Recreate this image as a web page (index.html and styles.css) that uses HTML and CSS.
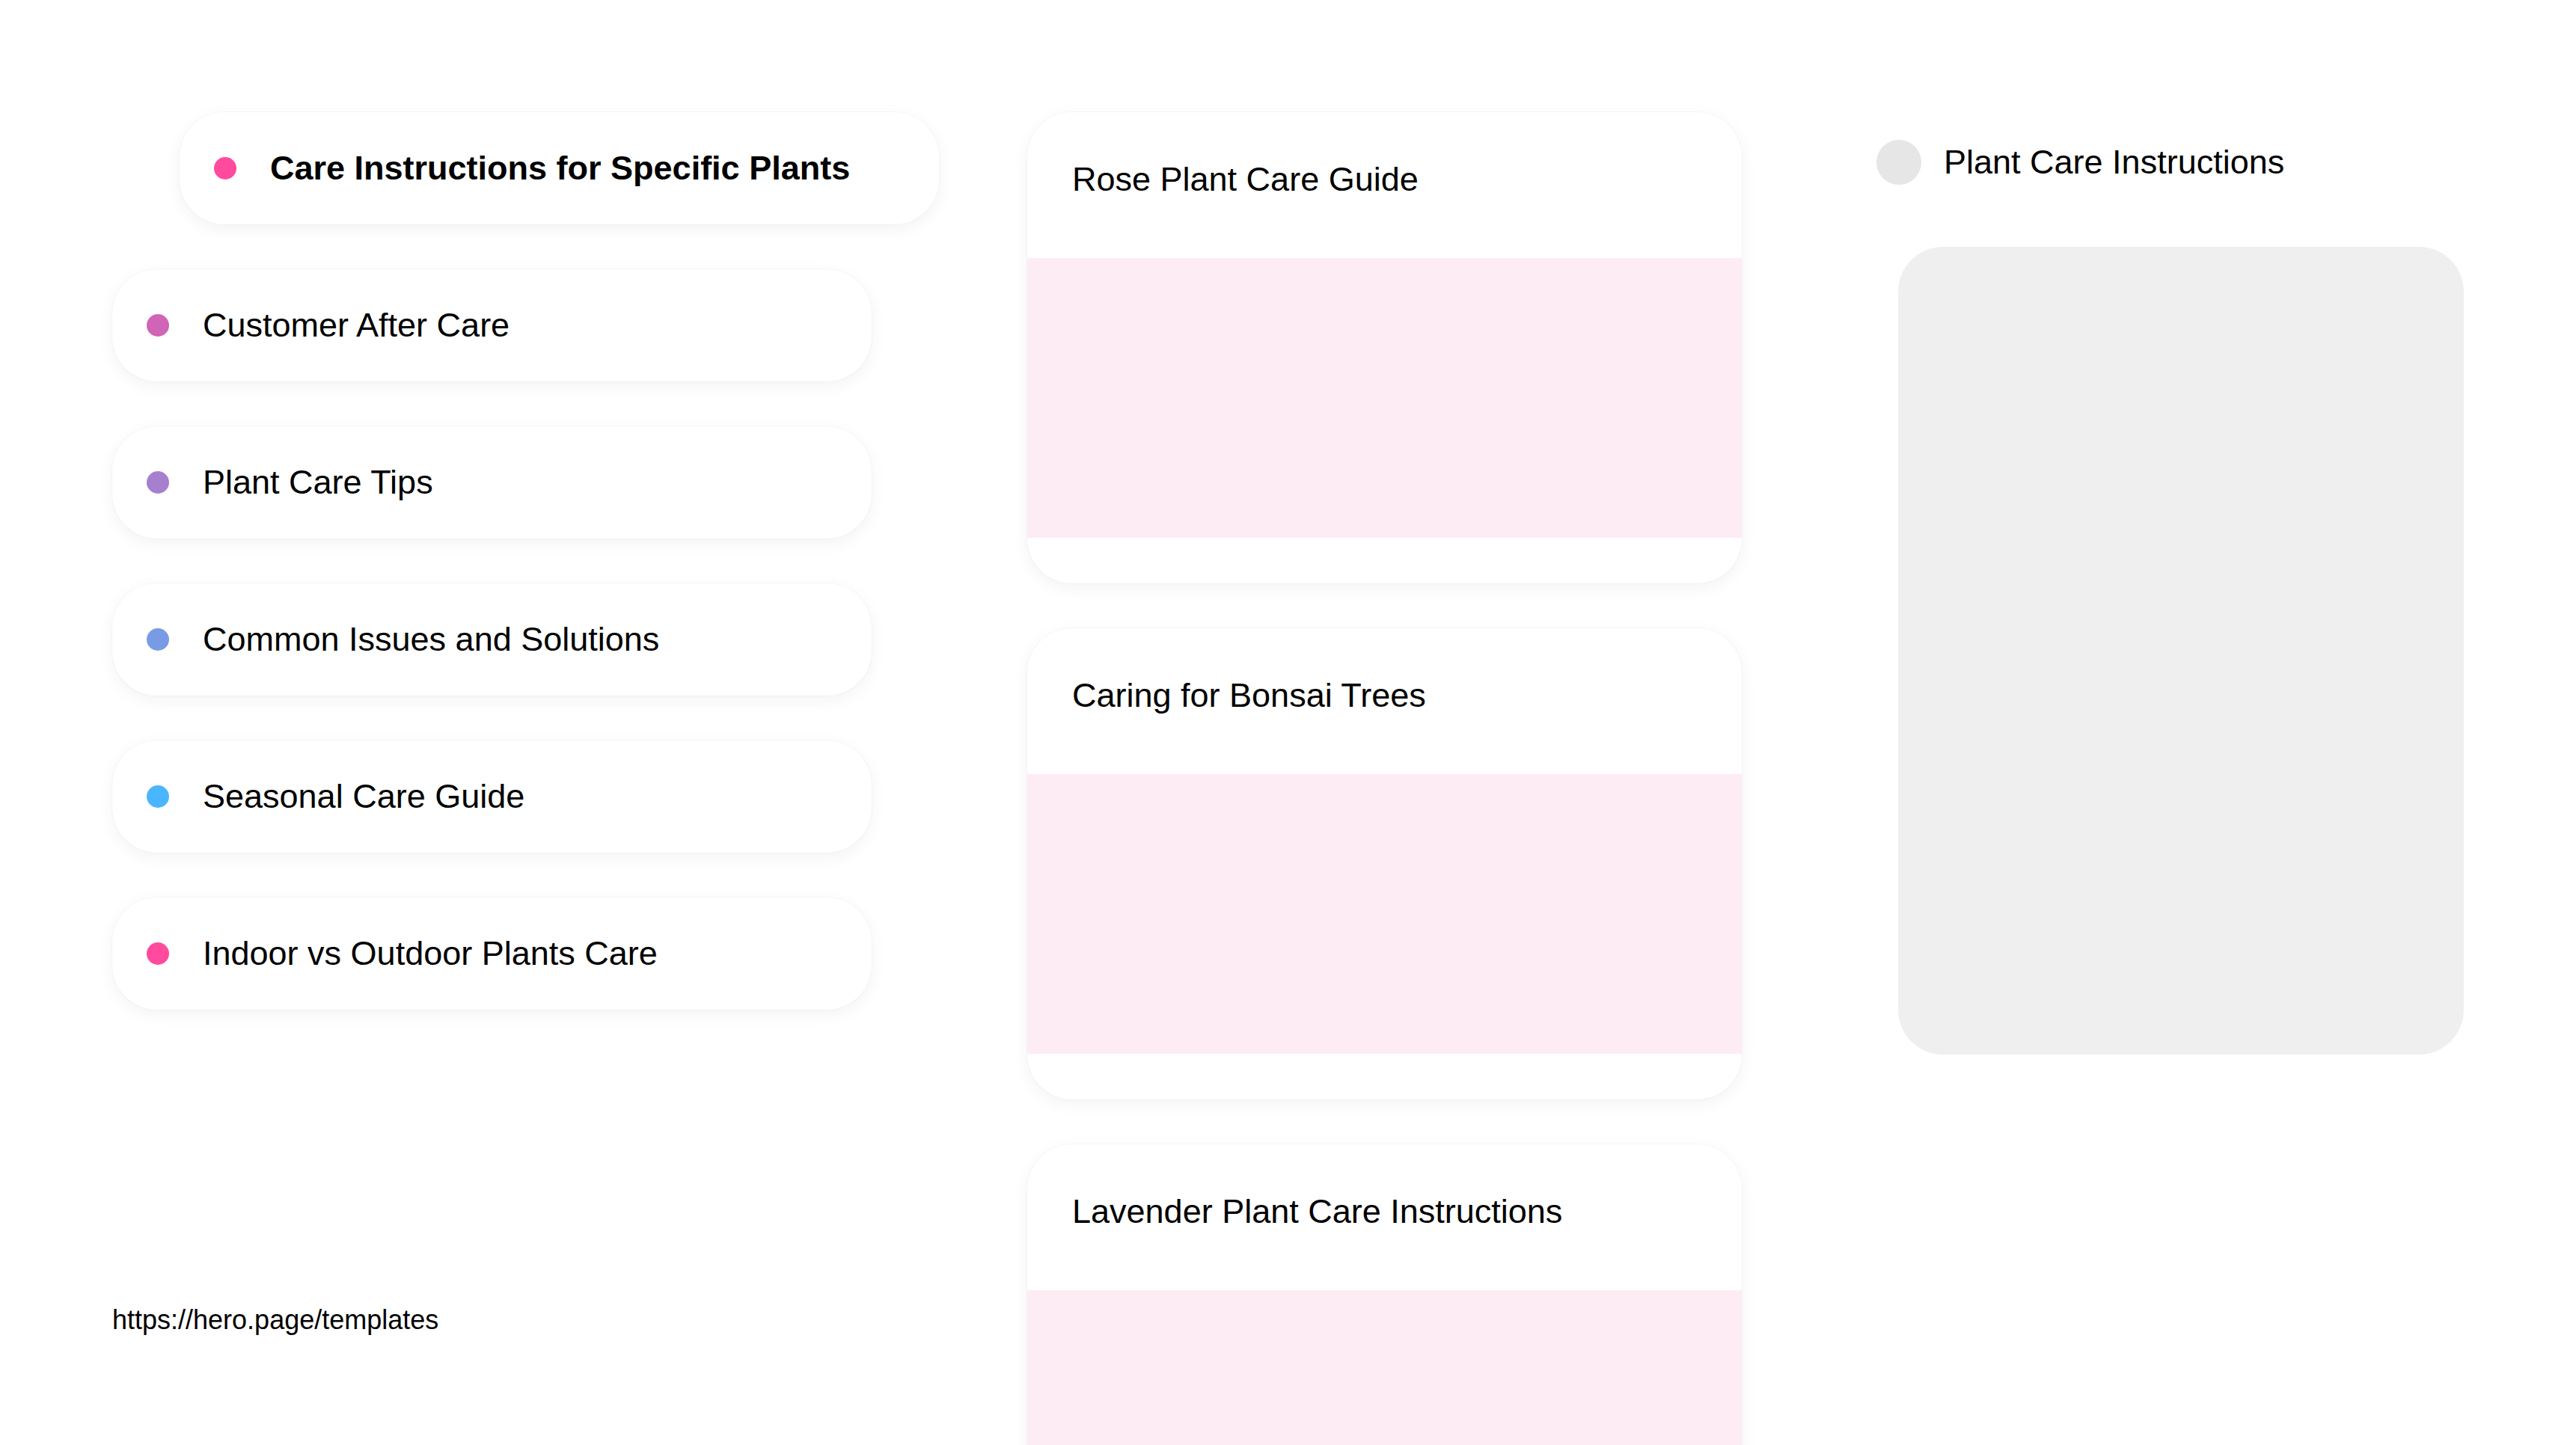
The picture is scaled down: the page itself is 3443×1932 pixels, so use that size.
FILE: index.html
```html
<!DOCTYPE html>
<html>
<head>
    <meta charset="utf-8">
    <title>Plant Care Instructions</title>
    <link rel="stylesheet" href="styles.css">
</head>
<body>
    <div class="page">
        <nav class="topics">
            <ul class="topic-list">
                <li class="topic active"><span class="dot dot-pink"></span>Care Instructions for Specific Plants</li>
                <li class="topic"><span class="dot dot-orchid"></span>Customer After Care</li>
                <li class="topic"><span class="dot dot-purple"></span>Plant Care Tips</li>
                <li class="topic"><span class="dot dot-blue"></span>Common Issues and Solutions</li>
                <li class="topic"><span class="dot dot-sky"></span>Seasonal Care Guide</li>
                <li class="topic"><span class="dot dot-pink"></span>Indoor vs Outdoor Plants Care</li>
            </ul>
            <div class="source">https://hero.page/templates</div>
        </nav>

        <main class="guides">
            <section class="guide">
                <h3 class="guide-title">Rose Plant Care Guide</h3>
                <div class="guide-media"></div>
                <div class="guide-foot"></div>
            </section>
            <section class="guide">
                <h3 class="guide-title">Caring for Bonsai Trees</h3>
                <div class="guide-media"></div>
                <div class="guide-foot"></div>
            </section>
            <section class="guide">
                <h3 class="guide-title">Lavender Plant Care Instructions</h3>
                <div class="guide-media"></div>
                <div class="guide-foot"></div>
            </section>
        </main>

        <aside class="preview">
            <div class="preview-head">
                <span class="avatar"></span>
                <span class="preview-title">Plant Care Instructions</span>
            </div>
            <div class="preview-box"></div>
        </aside>
    </div>
</body>
</html>
```

FILE: styles.css
```css
html {
    overflow: hidden;
}

body {
    margin: 0;
    padding: 0;
    background-color: #ffffff;
    color: #000000;
    font-family: 'Liberation Sans', Arial, sans-serif;
    height: 1932px;
    overflow: hidden;
}

.page {
    display: flex;
    flex-direction: row;
    align-items: flex-start;
    padding: 150px 150px 0 150px;
}

/* Left column: topic pills */
.topics {
    width: 1015px;
    flex-shrink: 0;
    display: flex;
    flex-direction: column;
}

.topic-list {
    list-style: none;
    margin: 0;
    padding: 0;
    display: flex;
    flex-direction: column;
    gap: 60px;
}

.topic {
    height: 150px;
    box-sizing: border-box;
    display: flex;
    align-items: center;
    padding-left: 46px;
    background-color: #ffffff;
    border-radius: 60px;
    box-shadow: 0 0 0 1px rgba(0, 0, 0, 0.025), 0 6px 22px rgba(0, 0, 0, 0.05);
    font-size: 45px;
}

.topic.active {
    margin-left: 90px;
    margin-right: -90px;
    font-weight: bold;
}

.dot {
    width: 30px;
    height: 30px;
    border-radius: 50%;
    margin-right: 45px;
    flex-shrink: 0;
}

.dot-pink { background-color: #ff4a9d; }
.dot-orchid { background-color: #d064b7; }
.dot-purple { background-color: #a77fcf; }
.dot-blue { background-color: #799be6; }
.dot-sky { background-color: #4ab6ff; }

.source {
    margin-top: 394px;
    font-size: 36px;
}

/* Middle column: guide cards */
.guides {
    width: 955px;
    flex-shrink: 0;
    margin-left: 208px;
    display: flex;
    flex-direction: column;
    gap: 60px;
}

.guide {
    background-color: #ffffff;
    border-radius: 60px;
    overflow: hidden;
    box-shadow: 0 0 0 1px rgba(0, 0, 0, 0.025), 0 6px 22px rgba(0, 0, 0, 0.05);
}

.guide-title {
    margin: 0;
    height: 195px;
    box-sizing: border-box;
    padding: 64px 60px 0 60px;
    font-size: 45px;
    font-weight: normal;
}

.guide-media {
    height: 374px;
    background-color: #fdecf4;
}

.guide-foot {
    height: 61px;
}

/* Right column: preview */
.preview {
    width: 785px;
    flex-shrink: 0;
    margin-left: auto;
}

.preview-head {
    display: flex;
    align-items: center;
    margin-top: 37px;
    height: 60px;
}

.avatar {
    width: 60px;
    height: 60px;
    border-radius: 50%;
    background-color: #e6e6e6;
    margin-right: 30px;
}

.preview-title {
    font-size: 45px;
}

.preview-box {
    margin-top: 83px;
    margin-left: 29px;
    width: 756px;
    height: 1080px;
    border-radius: 60px;
    background-color: #efefef;
}
```
